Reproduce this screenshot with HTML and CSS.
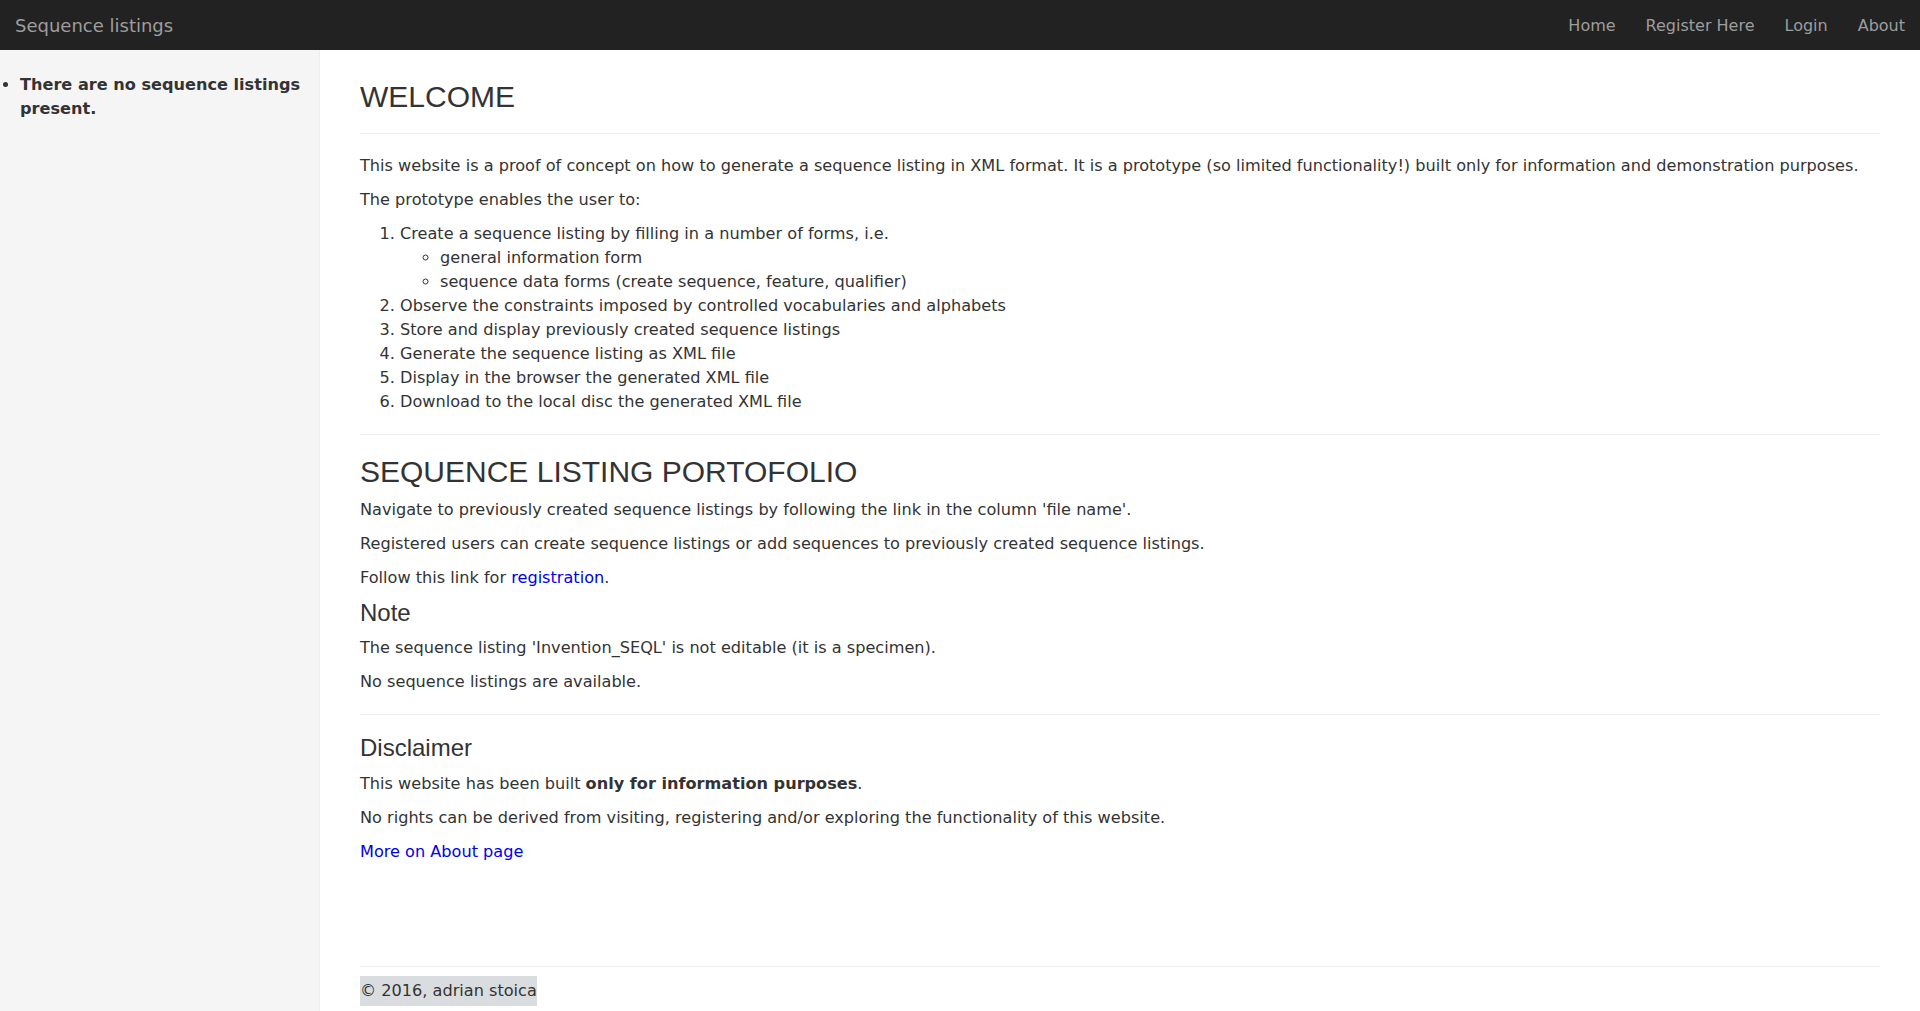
FILE: index.html
```html
<!DOCTYPE html>
<html lang="en">
<head>
<meta charset="utf-8">
<title>Sequence listings</title>
<link rel="stylesheet" href="styles.css">
</head>
<body>
<nav class="navbar">
  <a class="brand" href="#">Sequence listings</a>
  <ul class="nav-links">
    <li><a href="#">Home</a></li>
    <li><a href="#">Register Here</a></li>
    <li><a href="#">Login</a></li>
    <li><a href="#">About</a></li>
  </ul>
</nav>
<div class="layout">
  <aside class="sidebar">
    <ul class="side-list">
      <li>There are no sequence listings present.</li>
    </ul>
  </aside>
  <main class="main">
    <h1 class="title">WELCOME</h1>
    <hr>
    <p>This website is a proof of concept on how to generate a sequence listing in XML format. It is a prototype (so limited functionality!) built only for information and demonstration purposes.</p>
    <p>The prototype enables the user to:</p>
    <ol class="features">
      <li>Create a sequence listing by filling in a number of forms, i.e.
        <ul class="sub">
          <li>general information form</li>
          <li>sequence data forms (create sequence, feature, qualifier)</li>
        </ul>
      </li>
      <li>Observe the constraints imposed by controlled vocabularies and alphabets</li>
      <li>Store and display previously created sequence listings</li>
      <li>Generate the sequence listing as XML file</li>
      <li>Display in the browser the generated XML file</li>
      <li>Download to the local disc the generated XML file</li>
    </ol>
    <hr>
    <h2 class="title">SEQUENCE LISTING PORTOFOLIO</h2>
    <p>Navigate to previously created sequence listings by following the link in the column 'file name'.</p>
    <p>Registered users can create sequence listings or add sequences to previously created sequence listings.</p>
    <p>Follow this link for <a href="#">registration</a>.</p>
    <h3 class="subtitle">Note</h3>
    <p>The sequence listing 'Invention_SEQL' is not editable (it is a specimen).</p>
    <p>No sequence listings are available.</p>
    <hr>
    <h3 class="subtitle">Disclaimer</h3>
    <p>This website has been built <strong>only for information purposes</strong>.</p>
    <p>No rights can be derived from visiting, registering and/or exploring the functionality of this website.</p>
    <p><a href="#">More on About page</a></p>
    <footer class="footer">
      <hr class="footer-rule">
      <span class="copyright">© 2016, adrian stoica</span>
    </footer>
  </main>
</div>
</body>
</html>
```

FILE: styles.css
```css
html, body {
  margin: 0;
  padding: 0;
}

body {
  font-family: "DejaVu Sans", Verdana, sans-serif;
  font-size: 16.14px;
  line-height: 24px;
  color: #333;
  background: #fff;
  overflow: hidden;
}

a {
  color: #0000ee;
  text-decoration: none;
}

/* Navbar */
.navbar {
  box-sizing: border-box;
  height: 50px;
  padding-top: 2px;
  background: #222;
  display: flex;
  align-items: center;
  justify-content: space-between;
}

.brand {
  color: #9d9d9d;
  font-size: 18px;
  line-height: 48px;
  padding-left: 15px;
}

.nav-links {
  list-style: none;
  margin: 0;
  padding: 0;
  display: flex;
}

.nav-links a {
  display: block;
  color: #9d9d9d;
  font-size: 16px;
  line-height: 48px;
  padding: 0 15px;
}

/* Layout */
.layout {
  display: flex;
  height: calc(100vh - 50px);
}

.sidebar {
  width: 319px;
  flex: 0 0 319px;
  background: #f5f5f5;
  border-right: 1px solid #eee;
  padding-top: 23px;
}

.side-list {
  margin: 0;
  padding-left: 20px;
  font-weight: bold;
}

.main {
  flex: 1;
  padding: 30px 40px 0 40px;
}

/* text sits slightly lower in its line box; keep block rhythm of 24px + 10px */
.main p {
  margin: -3px 0 10px;
  padding-top: 3px;
}

hr {
  border: 0;
  border-top: 1px solid #eee;
  margin: 20px 0;
  height: 0;
}

.title {
  font-family: "Liberation Sans", Arial, sans-serif;
  font-weight: normal;
  font-size: 30px;
  line-height: 33px;
  margin: 0 0 10px;
  color: #333;
}

h2.title {
  margin-top: 20px;
}

.subtitle {
  font-family: "Liberation Sans", Arial, sans-serif;
  font-weight: normal;
  font-size: 24px;
  line-height: 26.4px;
  margin: 10px 0;
  color: #333;
}

.features {
  margin: -3px 0 10px;
  padding-top: 3px;
  padding-left: 40px;
}

.sub {
  margin: 0;
  padding-left: 40px;
  list-style-type: circle;
}

.footer {
  padding-top: 92px;
}

.footer .footer-rule {
  margin: 0 0 9px;
}

.copyright {
  display: inline-block;
  background: #dadddf;
  height: 30px;
  line-height: 30px;
}
```
